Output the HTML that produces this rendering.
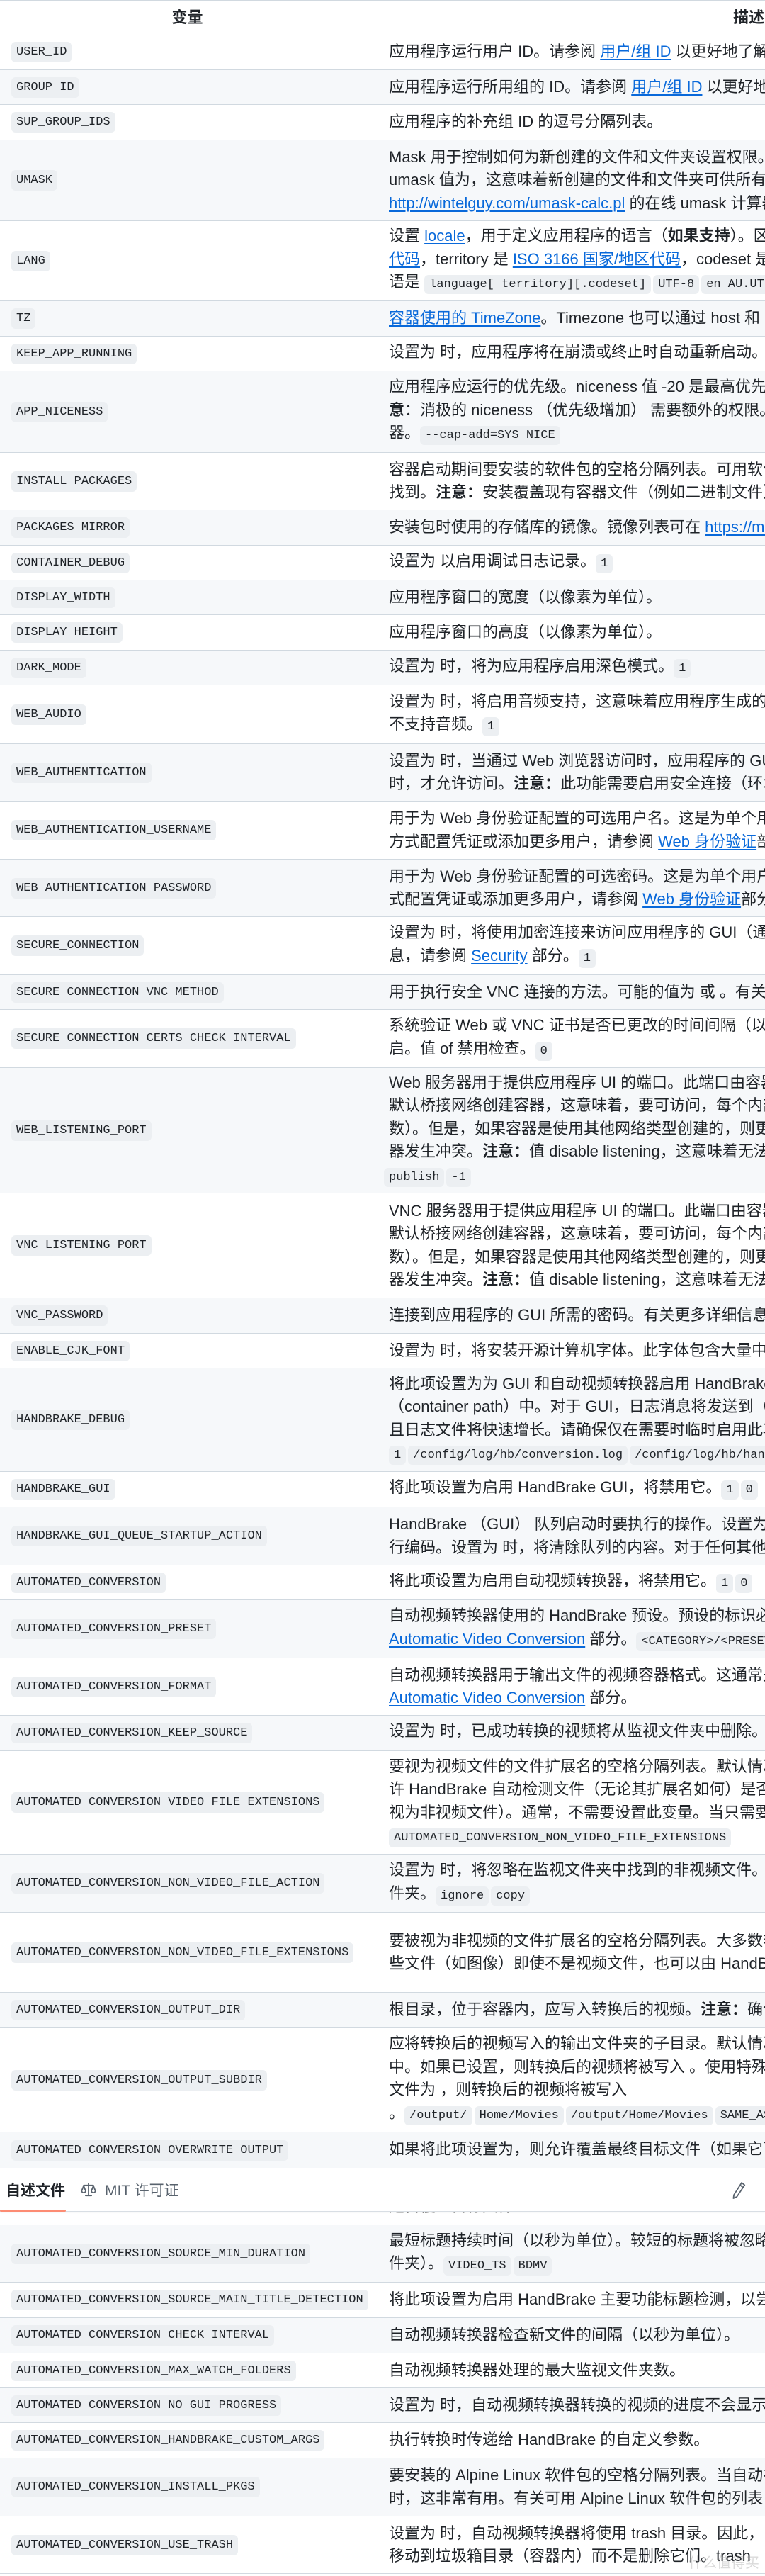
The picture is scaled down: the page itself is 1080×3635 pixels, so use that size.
<!DOCTYPE html>
<html><head><meta charset="utf-8">
<style>
*{box-sizing:border-box;margin:0;padding:0}
body{width:1080px;height:3635px;overflow:hidden;background:#fff;position:relative;font-family:"Liberation Sans Narrow","Liberation Sans","Noto Sans CJK SC",sans-serif;color:#1f2328;font-size:22px}
.r{position:absolute;left:0;width:1080px;border-bottom:1.5px solid #d1d9e0;display:flex;background:#fff}
.g{background:#f6f8fa}
.l{width:530px;flex:none;border-right:1.5px solid #d1d9e0;display:flex;align-items:center;padding-left:16px}
.d{flex:1;display:flex;flex-direction:column;justify-content:center;padding-left:19px;white-space:nowrap;overflow:hidden;line-height:32.5px}
code{font-family:"Liberation Mono",monospace;font-size:17px;background:#eceff2;border-radius:6px;padding:4px 7px;margin-right:3px}
.l code{font-size:17px;padding:5px 7px}
a{color:#0969da;text-decoration:underline;text-underline-offset:3px}
b{font-weight:bold}
.hd{position:absolute;top:0;left:0;width:1080px;height:50px;border-top:1.5px solid #d1d9e0;border-bottom:1.5px solid #d1d9e0;display:flex;font-weight:bold}
.bar{position:absolute;top:3059px;left:0;width:1080px;height:62px;background:#fff;border-bottom:1px solid #d8dee4;box-shadow:0 1px 2px rgba(0,0,0,.06)}
</style></head><body>
<div class="hd"><div style="width:530px;border-right:1.5px solid #d1d9e0;text-align:center;line-height:48px">变量</div><div style="padding-left:505px;line-height:48px">描述</div></div>

<div class="r" style="top:49px;height:50px"><div class="l"><code>USER_ID</code></div><div class="d"><div>应用程序运行用户 ID。请参阅 <a>用户/组 ID</a> 以更好地了解何时以及为什么</div></div></div>
<div class="r g" style="top:99px;height:49px"><div class="l"><code>GROUP_ID</code></div><div class="d"><div>应用程序运行所用组的 ID。请参阅 <a>用户/组 ID</a> 以更好地了解何时以及</div></div></div>
<div class="r" style="top:148px;height:50px"><div class="l"><code>SUP_GROUP_IDS</code></div><div class="d"><div>应用程序的补充组 ID 的逗号分隔列表。</div></div></div>
<div class="r g" style="top:198px;height:114px"><div class="l"><code>UMASK</code></div><div class="d"><div>Mask 用于控制如何为新创建的文件和文件夹设置权限。该值</div><div>umask 值为，这意味着新创建的文件和文件夹可供所有人读写</div><div><a>http://wintelguy.com/umask-calc.pl</a> 的在线 umask 计算器</div></div></div>
<div class="r" style="top:312px;height:113px"><div class="l"><code>LANG</code></div><div class="d"><div>设置 <a>locale</a>，用于定义应用程序的语言（<b>如果支持</b>）。区域设置的格式</div><div><a>代码</a>，territory 是 <a>ISO 3166 国家/地区代码</a>，codeset 是字符集</div><div>语是 <code>language[_territory][.codeset]</code><code>UTF-8</code><code>en_AU.UTF-8</code></div></div></div>
<div class="r g" style="top:425px;height:50px"><div class="l"><code>TZ</code></div><div class="d"><div><a>容器使用的 TimeZone</a>。Timezone 也可以通过 host 和 container</div></div></div>
<div class="r" style="top:475px;height:49px"><div class="l"><code>KEEP_APP_RUNNING</code></div><div class="d"><div>设置为 时，应用程序将在崩溃或终止时自动重新启动。 <code>1</code></div></div></div>
<div class="r g" style="top:524px;height:115px"><div class="l"><code>APP_NICENESS</code></div><div class="d"><div>应用程序应运行的优先级。niceness 值 -20 是最高优先级</div><div><b>意</b>：消极的 niceness （优先级增加） 需要额外的权限。在这种</div><div>器。<code>--cap-add=SYS_NICE</code></div></div></div>
<div class="r" style="top:639px;height:81px"><div class="l"><code>INSTALL_PACKAGES</code></div><div class="d"><div>容器启动期间要安装的软件包的空格分隔列表。可用软件包列表可在</div><div>找到。<b>注意：</b>安装覆盖现有容器文件（例如二进制文件）的软件包</div></div></div>
<div class="r g" style="top:720px;height:50px"><div class="l"><code>PACKAGES_MIRROR</code></div><div class="d"><div>安装包时使用的存储库的镜像。镜像列表可在 <a>https://mirrors.alpinelinux.org</a></div></div></div>
<div class="r" style="top:770px;height:49px"><div class="l"><code>CONTAINER_DEBUG</code></div><div class="d"><div>设置为 以启用调试日志记录。<code>1</code></div></div></div>
<div class="r g" style="top:819px;height:49px"><div class="l"><code>DISPLAY_WIDTH</code></div><div class="d"><div>应用程序窗口的宽度（以像素为单位）。</div></div></div>
<div class="r" style="top:868px;height:50px"><div class="l"><code>DISPLAY_HEIGHT</code></div><div class="d"><div>应用程序窗口的高度（以像素为单位）。</div></div></div>
<div class="r g" style="top:918px;height:49px"><div class="l"><code>DARK_MODE</code></div><div class="d"><div>设置为 时，将为应用程序启用深色模式。<code>1</code></div></div></div>
<div class="r" style="top:967px;height:83px"><div class="l"><code>WEB_AUDIO</code></div><div class="d"><div>设置为 时，将启用音频支持，这意味着应用程序生成的任何音频</div><div>不支持音频。<code>1</code></div></div></div>
<div class="r g" style="top:1050px;height:81px"><div class="l"><code>WEB_AUTHENTICATION</code></div><div class="d"><div>设置为 时，当通过 Web 浏览器访问时，应用程序的 GUI 受登录页面保护</div><div>时，才允许访问。<b>注意：</b>此功能需要启用安全连接（环境变量）</div></div></div>
<div class="r" style="top:1131px;height:82px"><div class="l"><code>WEB_AUTHENTICATION_USERNAME</code></div><div class="d"><div>用于为 Web 身份验证配置的可选用户名。这是为单个用户配置凭证的</div><div>方式配置凭证或添加更多用户，请参阅 <a>Web 身份验证</a>部分。</div></div></div>
<div class="r g" style="top:1213px;height:81px"><div class="l"><code>WEB_AUTHENTICATION_PASSWORD</code></div><div class="d"><div>用于为 Web 身份验证配置的可选密码。这是为单个用户配置凭证的快</div><div>式配置凭证或添加更多用户，请参阅 <a>Web 身份验证</a>部分。</div></div></div>
<div class="r" style="top:1294px;height:82px"><div class="l"><code>SECURE_CONNECTION</code></div><div class="d"><div>设置为 时，将使用加密连接来访问应用程序的 GUI（通过 Web 浏览器</div><div>息，请参阅 <a>Security</a> 部分。<code>1</code></div></div></div>
<div class="r g" style="top:1376px;height:49px"><div class="l"><code>SECURE_CONNECTION_VNC_METHOD</code></div><div class="d"><div>用于执行安全 VNC 连接的方法。可能的值为 或 。有关更多详细信息</div></div></div>
<div class="r" style="top:1425px;height:82px"><div class="l"><code>SECURE_CONNECTION_CERTS_CHECK_INTERVAL</code></div><div class="d"><div>系统验证 Web 或 VNC 证书是否已更改的时间间隔（以秒为单位）</div><div>启。值 of 禁用检查。<code>0</code></div></div></div>
<div class="r g" style="top:1507px;height:177px"><div class="l"><code>WEB_LISTENING_PORT</code></div><div class="d"><div>Web 服务器用于提供应用程序 UI 的端口。此端口由容器内部使用</div><div>默认桥接网络创建容器，这意味着，要可访问，每个内部端口都必须</div><div>数）。但是，如果容器是使用其他网络类型创建的，则更改端口可以防止</div><div>器发生冲突。<b>注意：</b>值 disable listening，这意味着无法通过 Web</div><div><code style="margin-left:-7px">publish</code><code>-1</code></div></div></div>
<div class="r" style="top:1684px;height:148px"><div class="l"><code>VNC_LISTENING_PORT</code></div><div class="d"><div>VNC 服务器用于提供应用程序 UI 的端口。此端口由容器内部使用</div><div>默认桥接网络创建容器，这意味着，要可访问，每个内部端口都必须</div><div>数）。但是，如果容器是使用其他网络类型创建的，则更改端口可以防止</div><div>器发生冲突。<b>注意：</b>值 disable listening，这意味着无法通过 VNC</div></div></div>
<div class="r g" style="top:1832px;height:50px"><div class="l"><code>VNC_PASSWORD</code></div><div class="d"><div>连接到应用程序的 GUI 所需的密码。有关更多详细信息，请参阅</div></div></div>
<div class="r" style="top:1882px;height:49px"><div class="l"><code>ENABLE_CJK_FONT</code></div><div class="d"><div>设置为 时，将安装开源计算机字体。此字体包含大量中文/日文/韩文字符</div></div></div>
<div class="r g" style="top:1931px;height:146px"><div class="l"><code>HANDBRAKE_DEBUG</code></div><div class="d"><div>将此项设置为为 GUI 和自动视频转换器启用 HandBrake 调试日志记录</div><div>（container path）中。对于 GUI，日志消息将发送到（容器路径）。</div><div>且日志文件将快速增长。请确保仅在需要时临时启用此项。</div><div><code>1</code><code>/config/log/hb/conversion.log</code><code>/config/log/hb/handbrake.debug.log</code></div></div></div>
<div class="r" style="top:2077px;height:50px"><div class="l"><code>HANDBRAKE_GUI</code></div><div class="d"><div>将此项设置为启用 HandBrake GUI，将禁用它。<code>1</code><code>0</code></div></div></div>
<div class="r g" style="top:2127px;height:82px"><div class="l"><code>HANDBRAKE_GUI_QUEUE_STARTUP_ACTION</code></div><div class="d"><div>HandBrake （GUI） 队列启动时要执行的操作。设置为 时，将自动开始</div><div>行编码。设置为 时，将清除队列的内容。对于任何其他值，不执行任何操作</div></div></div>
<div class="r" style="top:2209px;height:49px"><div class="l"><code>AUTOMATED_CONVERSION</code></div><div class="d"><div>将此项设置为启用自动视频转换器，将禁用它。<code>1</code><code>0</code></div></div></div>
<div class="r g" style="top:2258px;height:82px"><div class="l"><code>AUTOMATED_CONVERSION_PRESET</code></div><div class="d"><div>自动视频转换器使用的 HandBrake 预设。预设的标识必须采用</div><div><a>Automatic Video Conversion</a> 部分。<code>&lt;CATEGORY&gt;/&lt;PRESET NAME&gt;</code></div></div></div>
<div class="r" style="top:2340px;height:81px"><div class="l"><code>AUTOMATED_CONVERSION_FORMAT</code></div><div class="d"><div>自动视频转换器用于输出文件的视频容器格式。这通常是</div><div><a>Automatic Video Conversion</a> 部分。</div></div></div>
<div class="r g" style="top:2421px;height:50px"><div class="l"><code>AUTOMATED_CONVERSION_KEEP_SOURCE</code></div><div class="d"><div>设置为 时，已成功转换的视频将从监视文件夹中删除。<code>0</code></div></div></div>
<div class="r" style="top:2471px;height:146px"><div class="l"><code>AUTOMATED_CONVERSION_VIDEO_FILE_EXTENSIONS</code></div><div class="d"><div>要视为视频文件的文件扩展名的空格分隔列表。默认情况下，此列表为空</div><div>许 HandBrake 自动检测文件（无论其扩展名如何）是否为视频（请参阅</div><div>视为非视频文件）。通常，不需要设置此变量。当只需要转换特定文件时</div><div><code>AUTOMATED_CONVERSION_NON_VIDEO_FILE_EXTENSIONS</code></div></div></div>
<div class="r g" style="top:2617px;height:82px"><div class="l"><code>AUTOMATED_CONVERSION_NON_VIDEO_FILE_ACTION</code></div><div class="d"><div>设置为 时，将忽略在监视文件夹中找到的非视频文件。如果设置为，则</div><div>件夹。<code>ignore</code><code>copy</code></div></div></div>
<div class="r" style="top:2699px;height:113px"><div class="l"><code>AUTOMATED_CONVERSION_NON_VIDEO_FILE_EXTENSIONS</code></div><div class="d"><div>要被视为非视频的文件扩展名的空格分隔列表。大多数非视频文件</div><div>些文件（如图像）即使不是视频文件，也可以由 HandBrake 处理</div></div></div>
<div class="r g" style="top:2812px;height:50px"><div class="l"><code>AUTOMATED_CONVERSION_OUTPUT_DIR</code></div><div class="d"><div>根目录，位于容器内，应写入转换后的视频。<b>注意：</b>确保将其映射</div></div></div>
<div class="r" style="top:2862px;height:147px"><div class="l"><code>AUTOMATED_CONVERSION_OUTPUT_SUBDIR</code></div><div class="d"><div>应将转换后的视频写入的输出文件夹的子目录。默认情况下，视频写入</div><div>中。如果已设置，则转换后的视频将被写入 。使用特殊值时，如果源</div><div>文件为 ，则转换后的视频将被写入</div><div>。<code>/output/</code><code>Home/Movies</code><code>/output/Home/Movies</code><code>SAME_AS_SRC</code></div></div></div>
<div class="r g" style="top:3009px;height:81px;align-items:flex-start"><div class="l" style="height:50px"><code>AUTOMATED_CONVERSION_OVERWRITE_OUTPUT</code></div><div class="d" style="padding-top:8px"><div>如果将此项设置为，则允许覆盖最终目标文件（如果它已存在）。</div></div></div>
<div class="r" style="top:3090px;height:50px"><div class="l"></div><div class="d"><div style="color:#888">是否覆盖目标文件</div></div></div>
<div class="r g" style="top:3140px;height:81px"><div class="l"><code>AUTOMATED_CONVERSION_SOURCE_MIN_DURATION</code></div><div class="d"><div>最短标题持续时间（以秒为单位）。较短的标题将被忽略。这仅适用于</div><div>件夹）。<code>VIDEO_TS</code><code>BDMV</code></div></div></div>
<div class="r" style="top:3221px;height:50px"><div class="l"><code>AUTOMATED_CONVERSION_SOURCE_MAIN_TITLE_DETECTION</code></div><div class="d"><div>将此项设置为启用 HandBrake 主要功能标题检测，以尝试猜测主标题</div></div></div>
<div class="r g" style="top:3271px;height:50px"><div class="l"><code>AUTOMATED_CONVERSION_CHECK_INTERVAL</code></div><div class="d"><div>自动视频转换器检查新文件的间隔（以秒为单位）。</div></div></div>
<div class="r" style="top:3321px;height:49px"><div class="l"><code>AUTOMATED_CONVERSION_MAX_WATCH_FOLDERS</code></div><div class="d"><div>自动视频转换器处理的最大监视文件夹数。</div></div></div>
<div class="r g" style="top:3370px;height:49px"><div class="l"><code>AUTOMATED_CONVERSION_NO_GUI_PROGRESS</code></div><div class="d"><div>设置为 时，自动视频转换器转换的视频的进度不会显示在 GUI 中</div></div></div>
<div class="r" style="top:3419px;height:50px"><div class="l"><code>AUTOMATED_CONVERSION_HANDBRAKE_CUSTOM_ARGS</code></div><div class="d"><div>执行转换时传递给 HandBrake 的自定义参数。</div></div></div>
<div class="r g" style="top:3469px;height:82px"><div class="l"><code>AUTOMATED_CONVERSION_INSTALL_PKGS</code></div><div class="d"><div>要安装的 Alpine Linux 软件包的空格分隔列表。当自动视频转换器</div><div>时，这非常有用。有关可用 Alpine Linux 软件包的列表，请参阅</div></div></div>
<div class="r" style="top:3551px;height:81px"><div class="l"><code>AUTOMATED_CONVERSION_USE_TRASH</code></div><div class="d"><div>设置为 时，自动视频转换器将使用 trash 目录。因此，当</div><div>移动到垃圾箱目录（容器内）而不是删除它们。trash</div></div></div>

<div class="bar">
  <div style="position:absolute;left:8px;top:16px;font-size:21px;font-weight:bold;color:#1f2328">自述文件</div>
  <div style="position:absolute;left:0;bottom:-1px;width:93px;height:3px;background:#fd8c73;border-radius:2px"></div>
  <svg style="position:absolute;left:114px;top:20px" width="22" height="22" viewBox="0 0 16 16" fill="none" stroke="#59636e" stroke-width="1.3" stroke-linecap="round" stroke-linejoin="round"><path d="M8 1.5v12M3 3.5h10M5 14h6"/><path d="M3 4l-2 5a2 2 0 0 0 4 0z"/><path d="M13 4l-2 5a2 2 0 0 0 4 0z"/></svg>
  <div style="position:absolute;left:148px;top:16px;font-size:21px;color:#59636e">MIT 许可证</div>
  <svg style="position:absolute;left:1032px;top:18px" width="22" height="28" viewBox="0 0 16 20" fill="none" stroke="#59636e" stroke-width="1.3" stroke-linejoin="round"><path d="M11 2l3 2.5-8 12-3.5 1.5.5-3.5z"/><path d="M9.5 4.5l3 2.5"/></svg>
</div>
<div style="position:absolute;right:8px;top:3600px;font-size:20px;color:rgba(150,150,150,.35)">什么值得买</div>
</body></html>
